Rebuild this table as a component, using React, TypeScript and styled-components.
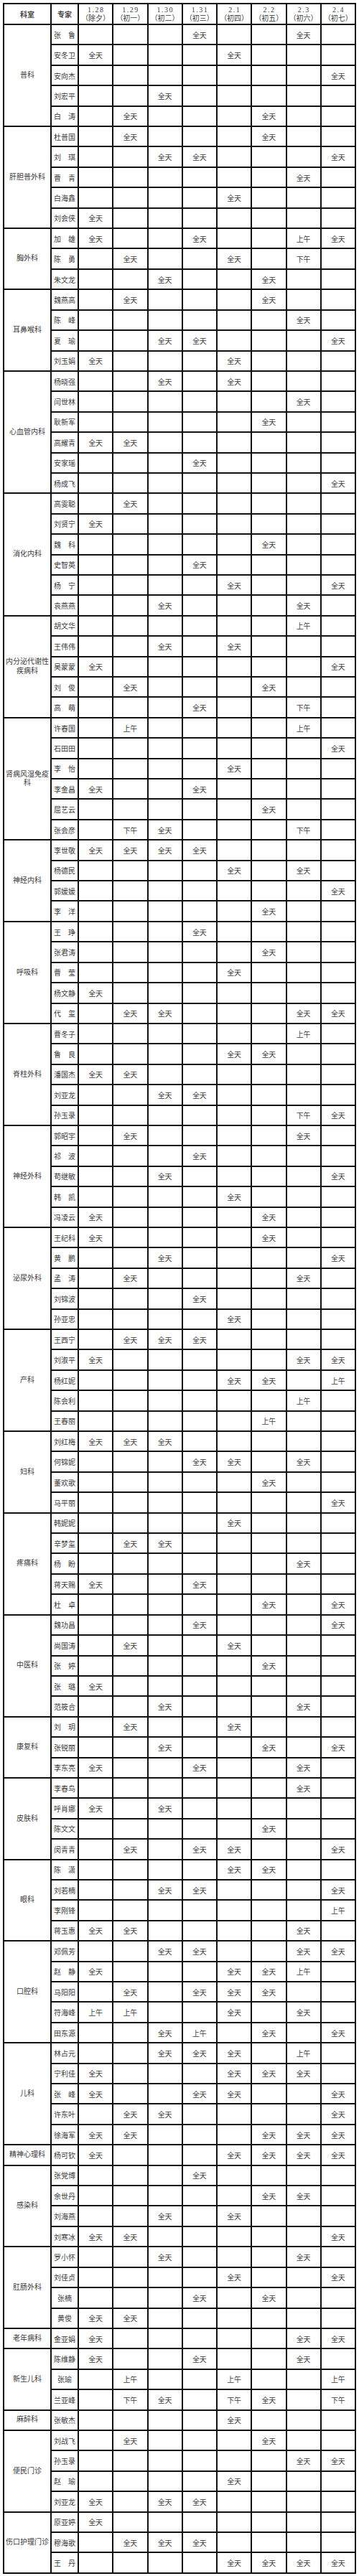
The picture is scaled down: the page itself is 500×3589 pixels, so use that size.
import React from 'react';
import styled, { createGlobalStyle } from 'styled-components';

const GlobalStyle = createGlobalStyle`
    html, body {
        margin: 0;
        padding: 0;
        background: #ffffff;
    }
    body {
        font-family: "Liberation Serif", "Noto Sans CJK SC", serif;
    }
`;

// 每位专家一行，8 个字符依次对应 1.28 ~ 2.4
// Q = 全天, S = 上午, X = 下午, . = 空
type Doctor = [string, string];
type Dept = { name: string; doctors: Doctor[] };

const DAYS = [
    ['1.28', '（除夕）'],
    ['1.29', '（初一）'],
    ['1.30', '（初二）'],
    ['1.31', '（初三）'],
    ['2.1', '（初四）'],
    ['2.2', '（初五）'],
    ['2.3', '（初六）'],
    ['2.4', '（初七）'],
];

const MARK: Record<string, string> = { Q: '全天', S: '上午', X: '下午', '.': '' };

const DEPTS: Dept[] = [
    { name: '普科', doctors: [['张　鲁', '...Q..Q.'], ['安冬卫', 'Q...Q...'], ['安向杰', '.......Q'], ['刘宏平', '..Q.....'], ['白　涛', '.Q...Q..']] },
    { name: '肝胆普外科', doctors: [['杜普国', '.Q...Q..'], ['刘　琪', '..QQ...Q'], ['曹　青', '......Q.'], ['白海鑫', '....Q...'], ['刘会侠', 'Q.......']] },
    { name: '胸外科', doctors: [['加　雄', 'Q..Q..SQ'], ['陈　勇', '.Q..Q.X.'], ['朱文龙', '..Q..Q..']] },
    { name: '耳鼻喉科', doctors: [['魏燕高', '.Q...Q..'], ['陈　峰', '......Q.'], ['夏　瑜', '..QQ...Q'], ['刘玉娟', 'Q...Q...']] },
    { name: '心血管内科', doctors: [['杨晓强', '..Q.Q...'], ['闫世林', '......Q.'], ['耿新军', '.....Q..'], ['高耀青', 'QQ......'], ['安家瑶', '...Q....'], ['杨成飞', '.......Q']] },
    { name: '消化内科', doctors: [['高雯聪', '.Q......'], ['刘贤宁', 'Q.......'], ['魏　科', '.....Q..'], ['史智英', '...Q....'], ['杨　宁', '....Q..Q'], ['袁燕燕', '..Q...Q.']] },
    { name: '内分泌代谢性疾病科', doctors: [['胡文华', '......S.'], ['王伟伟', '..Q.Q...'], ['吴蒙蒙', 'Q......Q'], ['刘　俊', '.Q...Q..'], ['高　萌', '...Q..X.']] },
    { name: '肾病风湿免疫科', doctors: [['许春国', '.S....S.'], ['石田田', '.......Q'], ['李　怡', '....Q...'], ['李金昌', 'Q..Q....'], ['屈艺云', '.....Q..'], ['张会彦', '.XQ...X.']] },
    { name: '神经内科', doctors: [['李世敬', 'QQQQ....'], ['杨德民', '....Q.Q.'], ['郭媛媛', '.......Q'], ['李　洋', '.....Q..']] },
    { name: '呼吸科', doctors: [['王　琤', '...Q....'], ['张君涛', '.....Q..'], ['曹　莹', '....Q...'], ['杨文静', 'Q.......'], ['代　玺', '.QQ...QQ']] },
    { name: '脊柱外科', doctors: [['曹冬子', '......S.'], ['鲁　良', '....QQ..'], ['潘国杰', 'QQ......'], ['刘亚龙', '..QQ....'], ['孙玉录', '......XQ']] },
    { name: '神经外科', doctors: [['郭昭宇', '.Q....Q.'], ['祁　波', '...Q....'], ['苟继敏', '..Q....Q'], ['韩　凯', '....Q...'], ['冯凌云', 'Q....Q..']] },
    { name: '泌尿外科', doctors: [['王纪科', 'Q....Q..'], ['黄　鹏', '..Q....Q'], ['孟　涛', '.Q....Q.'], ['刘锦波', '...Q....'], ['孙亚忠', '....Q...']] },
    { name: '产科', doctors: [['王西宁', '.QQQ....'], ['刘淑平', 'Q.....QQ'], ['杨红妮', '....QQ.S'], ['陈会利', '......S.'], ['王春丽', '.....S..']] },
    { name: '妇科', doctors: [['刘红梅', 'QQQ.....'], ['何锦妮', '...QQ.Q.'], ['董欢歌', '.....Q..'], ['马平丽', '.......Q']] },
    { name: '疼痛科', doctors: [['韩妮妮', '....Q...'], ['辛梦玺', '.QQ.....'], ['杨　盼', '......Q.'], ['蒋天赐', 'Q..Q....'], ['杜　卓', '.....Q.Q']] },
    { name: '中医科', doctors: [['魏功昌', '...Q...Q'], ['尚国涛', '.Q..Q...'], ['张　婷', '.....Q..'], ['张　璐', 'Q.......'], ['范筱合', '..Q...Q.']] },
    { name: '康复科', doctors: [['刘　玥', '.Q..Q...'], ['张锐丽', '..Q..Q.Q'], ['李东亮', 'Q..Q..Q.']] },
    { name: '皮肤科', doctors: [['李春鸟', '......Q.'], ['呼肖娜', 'Q.Q.....'], ['陈文文', '.....Q..'], ['闵青青', '.Q.QQ..Q']] },
    { name: '眼科', doctors: [['陈　潇', '....QQ..'], ['刘若楠', '..QQ...Q'], ['李刚锋', '.......S'], ['蒋玉惠', 'QQ....Q.']] },
    { name: '口腔科', doctors: [['邓佩芳', '..QQ..QQ'], ['赵　静', 'Q...QQS.'], ['马阳阳', '.Q.QQQ..'], ['符海峰', 'SS..Q.Q.'], ['田东源', '..QS.Q.Q']] },
    { name: '儿科', doctors: [['林占元', '..QQQ.S.'], ['宁利佳', 'Q...QQQ.'], ['张　峰', 'Q..QQ..Q'], ['许东叶', '.QQ....Q'], ['徐海军', 'QQ...QQQ']] },
    { name: '精神心理科', doctors: [['杨可钦', 'Q...QQQQ']] },
    { name: '感染科', doctors: [['张党博', '...Q....'], ['余世丹', '.....QQ.'], ['刘海燕', '..Q.Q...'], ['刘寒冰', 'QQ.....Q']] },
    { name: '肛肠外科', doctors: [['罗小怀', '..Q...Q.'], ['刘佳贞', '....Q..Q'], ['张楠', '...Q.Q..'], ['黄俊', 'QQ......']] },
    { name: '老年病科', doctors: [['金亚娟', 'Q.....QQ']] },
    { name: '新生儿科', doctors: [['陈维静', 'Q..Q..Q.'], ['张瑜', '.S..S..S'], ['兰亚峰', '.XQ.XQ.X']] },
    { name: '麻醉科', doctors: [['张敏杰', '....Q...']] },
    { name: '便民门诊', doctors: [['刘战飞', '.Q...Q..'], ['孙玉录', '......QQ'], ['赵　瑜', '....Q...'], ['刘亚龙', 'Q.QQ....']] },
    { name: '伤口护理门诊', doctors: [['原亚婷', 'Q.......'], ['穆海歌', '.QQQ....'], ['王　丹', '....QQQQ']] },
];

const App = () => {
    return (
        <Page>
            <GlobalStyle />
            <Schedule>
                <HeadCell $bold>科室</HeadCell>
                <HeadCell $bold>专家</HeadCell>
                {DAYS.map(([date, lunar]) => (
                    <HeadCell key={date}>
                        <DateLine>{date}</DateLine>
                        <LunarLine>{lunar}</LunarLine>
                    </HeadCell>
                ))}
                {DEPTS.map((dept) =>
                    dept.doctors.map(([name, days], i) => (
                        <React.Fragment key={dept.name + name}>
                            {i === 0 && <DeptCell $span={dept.doctors.length}>{dept.name}</DeptCell>}
                            <NameCell>{name}</NameCell>
                            {days.split('').map((d, j) => (
                                <DayCell key={j}>{MARK[d]}</DayCell>
                            ))}
                        </React.Fragment>
                    ))
                )}
            </Schedule>
        </Page>
    );
};

export default App;

const Page = styled.div`
    padding: 4px 0 0 4px;
    width: 500px;
    box-sizing: border-box;
`;

const Schedule = styled.div`
    display: grid;
    grid-template-columns: 64px 36px repeat(8, 1fr);
    grid-template-rows: 27px;
    grid-auto-rows: 26.42px;
    gap: 2px;
    padding: 2px;
    width: 492px;
    box-sizing: border-box;
    background: #111111;
`;

const Cell = styled.div`
    background: #ffffff;
    display: flex;
    align-items: center;
    justify-content: center;
    text-align: center;
    font-size: 10px;
    color: #3c3c3c;
    overflow: hidden;
`;

const HeadCell = styled(Cell)<{ $bold?: boolean }>`
    flex-direction: column;
    font-weight: ${(p) => (p.$bold ? 700 : 400)};
    color: ${(p) => (p.$bold ? '#444' : '#3c3c3c')};
`;

const DateLine = styled.div`
    line-height: 12px;
    letter-spacing: 1.5px;
    padding-left: 1px;
`;

const LunarLine = styled.div`
    line-height: 12px;
    white-space: nowrap;
`;

const DeptCell = styled(Cell)<{ $span: number }>`
    grid-row: span ${(p) => p.$span};
    line-height: 12.5px;
    padding: 0 1px;
`;

const NameCell = styled(Cell)`
    white-space: nowrap;
`;

const DayCell = styled(Cell)``;
